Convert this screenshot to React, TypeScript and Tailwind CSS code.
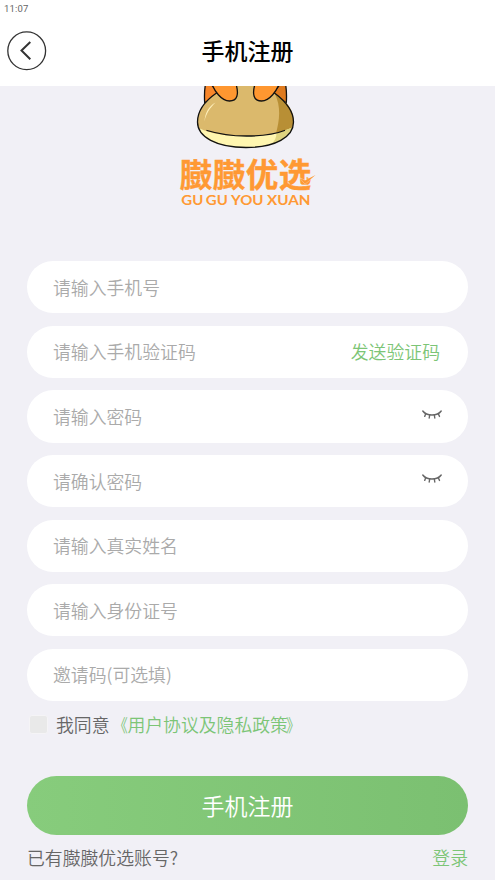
import React from 'react';

function ClosedEye() {
  return (
    <svg width="20" height="10" viewBox="0 0 20 10" fill="none" stroke="#666" strokeWidth="1.4" strokeLinecap="round">
      <path d="M.8 1C3 4 6 5 10 5S17 4 19.200 1" />
      <path d="M3.600 4 2.700 6.400M7.700 5 7.200 8M12.300 5l.5 3M16.400 4l1.100 2.400" />
    </svg>
  );
}

function Mascot() {
  return (
    <svg className="block" width="150" height="64" viewBox="172.500 86 150 64">
      <g stroke="#111" strokeWidth="1.300" strokeLinejoin="round" strokeLinecap="round">
        <path d="M205 84q-1.500 8-.8 19l14-10-8-9z" fill="#f8862a" />
        <path d="M285 84q1.500 8 .8 19l-13-10 7-9z" fill="#df7a1e" />
        <path d="M216 93C203 102 197 111 197 122c0 15 19 25.500 48.500 25.500S293 137 293 122c0-11-7-20-19-29l-6-9h-45z" fill="#dbb96c" stroke="none" />
        <path d="M274 93c7 14 5 27 1.500 40.500h13c9-13 5-28-14.500-40.500z" fill="#b88f35" stroke="none" />
        <path d="M198 128C212 134.500 228 136 246 136s33-2.500 46-8.500c-4 14-22 20-46.500 20S202 141 198 128z" fill="#fff6b0" stroke="none" />
        <path d="M276 133.200l16-5.700c-3 8-10 13.500-21 16.500 3-3 5-6.500 5-10.800z" fill="#dfd480" stroke="none" />
        <path d="M216 93C203 102 197 111 197 122c0 15 19 25.500 48.500 25.500S293 137 293 122c0-11-7-20-19-29" fill="none" />
        <path d="M206.500 130.500c13 4 25 5.500 39.500 5.500s28-1.500 38-5.500" fill="none" />
        <path d="M211.500 84c2 6 9 17 17.500 17 8 0 9.500-7 6.500-17z" fill="#ff9730" />
        <path d="M278.500 84c-2 6-9 17-17.500 17-8 0-9.500-7-6.500-17z" fill="#ff9730" />
      </g>
      <path d="M215 102.500c-7 4-10.500 10.500-11 19 1.500-8 5.500-13.500 11-19z" fill="#fff1bd" />
    </svg>
  );
}

function LogoWords() {
  return (
    <svg className="block" width="150" height="62" viewBox="172.500 149.500 150 62" fill="#ff9933">
      <text x="179.300" y="186.500" fontSize="32.600" fontWeight="700" textLength="131.500" stroke="#ff9933" strokeWidth="0.400" fontFamily="'Noto Sans CJK SC', sans-serif">臌臌优选</text>
      <path d="M299.500 177.500 304.500 183.500 315 174.500 304.500 180z" stroke="#f1f0f6" strokeWidth="0.600" paintOrder="stroke" />
      <g fontSize="13.300" fontWeight="700" fontFamily="Lato, sans-serif">
        <text x="180.800" y="204.500" textLength="22" lengthAdjust="spacingAndGlyphs">GU</text>
        <text x="205.300" y="204.500" textLength="22" lengthAdjust="spacingAndGlyphs">GU</text>
        <text x="230.500" y="204.500" textLength="32.500" lengthAdjust="spacingAndGlyphs">YOU</text>
        <text x="266.500" y="204.500" textLength="43.500" lengthAdjust="spacingAndGlyphs">XUAN</text>
      </g>
    </svg>
  );
}

const fields: { label: string; kind?: 'code' | 'secret' }[] = [
  { label: '请输入手机号' },
  { label: '请输入手机验证码', kind: 'code' },
  { label: '请输入密码', kind: 'secret' },
  { label: '请确认密码', kind: 'secret' },
  { label: '请输入真实姓名' },
  { label: '请输入身份证号' },
  { label: '邀请码(可选填)' },
];

export default function App() {
  return (
    <div className="flex h-[880px] w-full flex-col overflow-hidden bg-[#f1f0f6] font-['Noto_Sans_CJK_SC',sans-serif] text-[17.850px] font-[350] leading-[26px]">
      <header className="h-[85.500px] shrink-0 bg-white">
        <div className="h-[30px] pl-1 pt-[2px] font-[Roboto,sans-serif] text-[9.500px] font-normal leading-[13px] tracking-[0.2px] text-[#666]">11:07</div>
        <div className="grid h-[41px] grid-cols-[48px_1fr_48px] items-center">
          <button className="pl-[7px]" aria-label="返回">
            <svg width="40" height="40" viewBox="0 0 40 40" fill="none" stroke="#333">
              <circle cx="19.700" cy="19.800" r="18.900" strokeWidth="1.300" />
              <path d="M23.300 11 14.500 19.500l8.800 8.700" strokeWidth="2" />
            </svg>
          </button>
          <h1 className="pb-[2px] text-center text-[23px] font-medium leading-[34px] text-black">手机注册</h1>
        </div>
      </header>
      <div className="flex h-[175.800px] shrink-0 flex-col items-center">
        <Mascot />
        <LogoWords />
      </div>
      <main className="flex flex-col px-[27px]">
        <div className="flex flex-col gap-[12.400px]">
          {fields.map((f) => (
            <div key={f.label} className="flex h-[52.200px] items-center justify-between rounded-full bg-white pb-[1px] pl-[26px] pr-[28px] text-[#aaa]">
              <span>{f.label}</span>
              {f.kind === 'code' && <span className="text-[#7cc576]">发送验证码</span>}
              {f.kind === 'secret' && <span className="-mr-[2px] -mt-[3px]"><ClosedEye /></span>}
            </div>
          ))}
        </div>
        <div className="mt-[10.500px] flex h-[26px] items-center pl-[2px] text-[#666]">
          <span className="mr-2 size-[19px] rounded-[3px] border border-[#f5f4f6] bg-[#e9e9e9]" />
          <span className="pb-[1px]">我同意</span>
          <span className="pb-[1px] text-[#7cc576]">
            <span className="inline-block origin-right scale-x-[0.8]">《</span>用户协议及隐私政策<span className="-ml-[2px] inline-block origin-left scale-x-[0.8]">》</span>
          </span>
        </div>
        <button className="mt-[38.600px] h-[59px] rounded-full bg-linear-to-r from-[#87cc7c] to-[#7bc071] pb-[2px] text-[23px] font-[350] text-white">手机注册</button>
        <div className="mt-[9px] flex justify-between text-[#666]">
          <span>已有臌臌优选账号?</span>
          <span className="text-[#7cc576]">登录</span>
        </div>
      </main>
    </div>
  );
}
